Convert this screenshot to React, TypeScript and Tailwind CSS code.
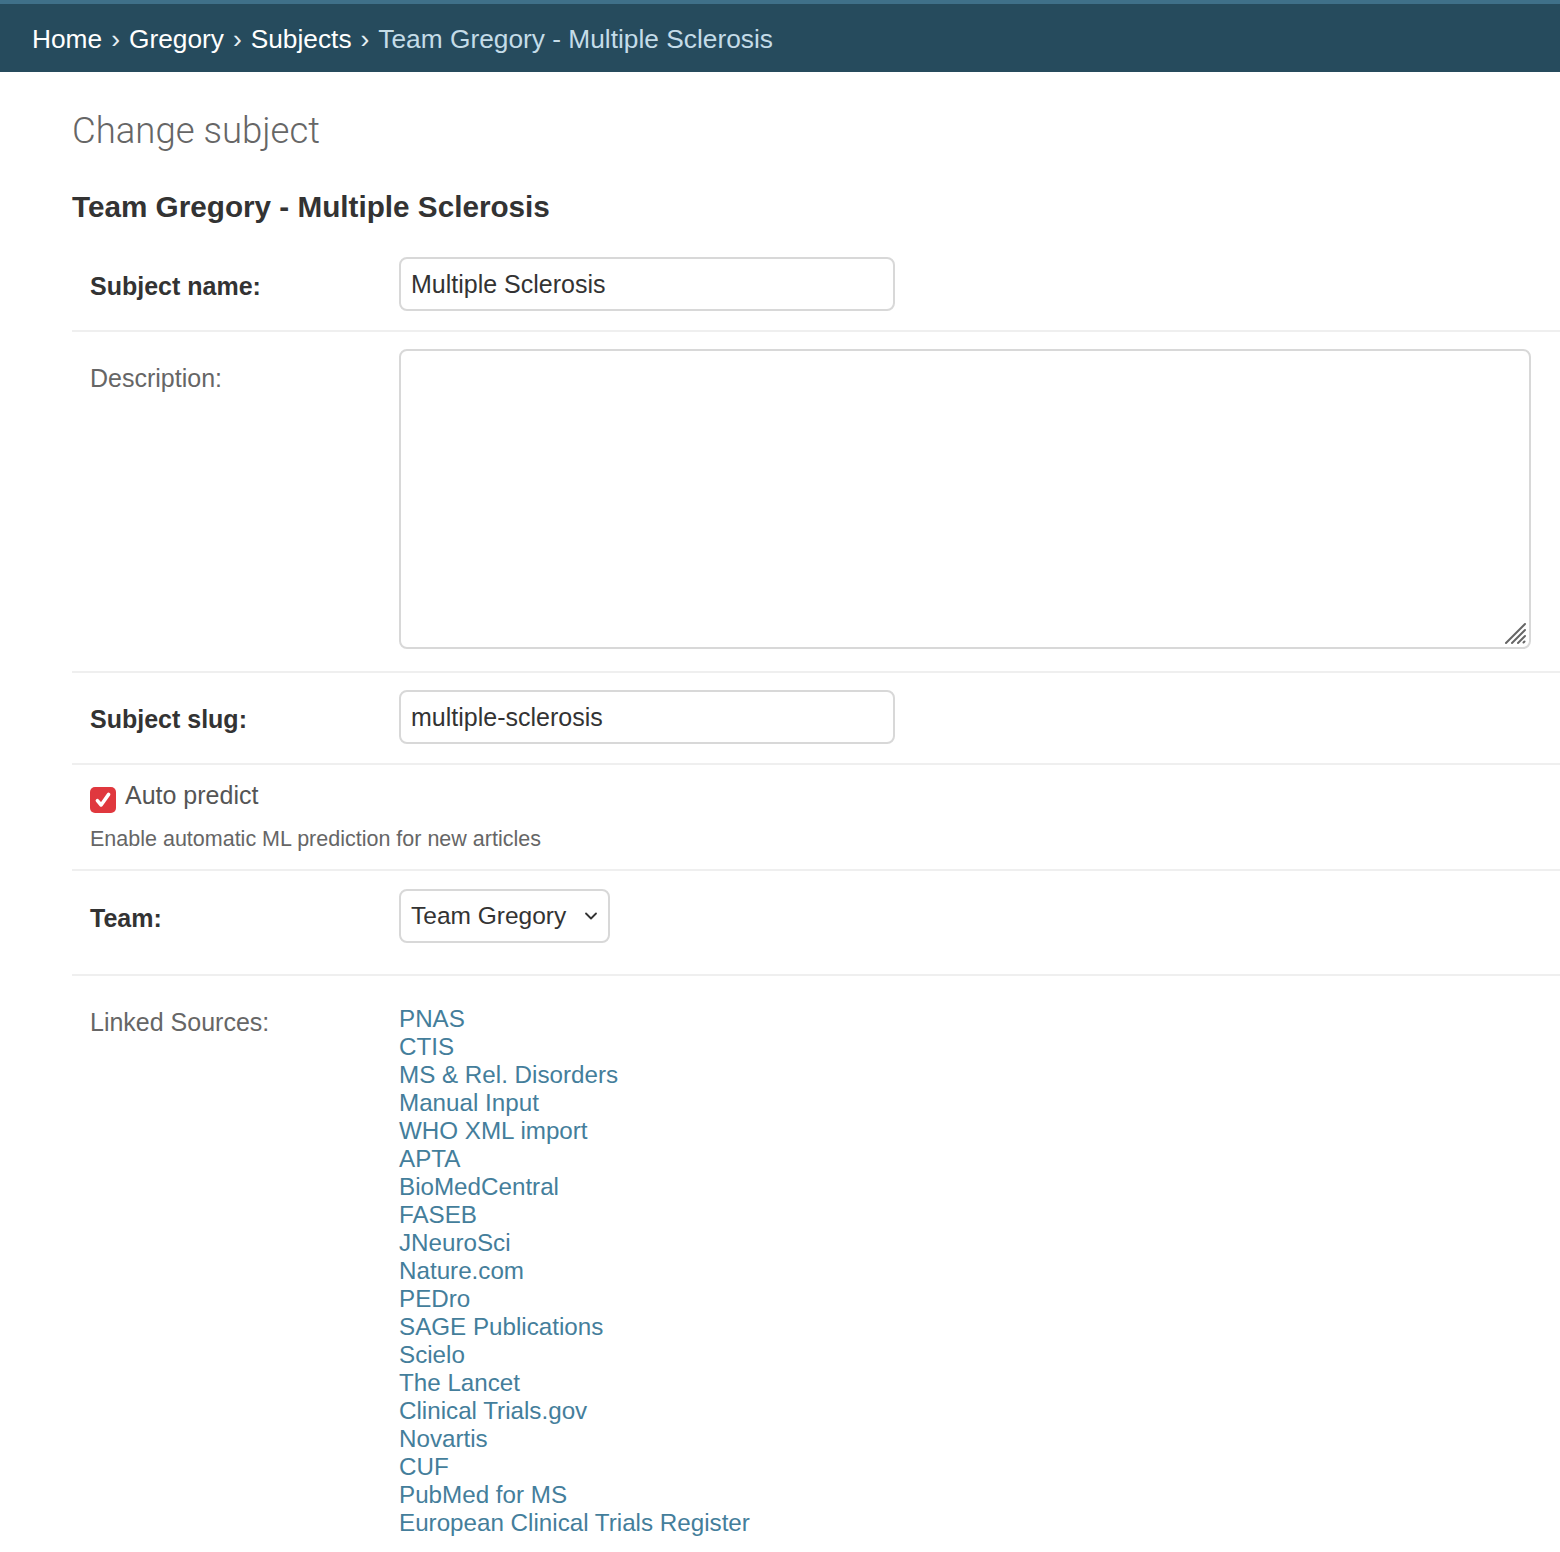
import { ChevronDown } from "lucide-react";

const sources = [
  "PNAS",
  "CTIS",
  "MS & Rel. Disorders",
  "Manual Input",
  "WHO XML import",
  "APTA",
  "BioMedCentral",
  "FASEB",
  "JNeuroSci",
  "Nature.com",
  "PEDro",
  "SAGE Publications",
  "Scielo",
  "The Lancet",
  "Clinical Trials.gov",
  "Novartis",
  "CUF",
  "PubMed for MS",
  "European Clinical Trials Register",
];

const font = "font-['Liberation_Sans',Arial,sans-serif]";

function Label({ children, bold }: { children: React.ReactNode; bold?: boolean }) {
  return (
    <label
      className={`mt-[14px] w-[309px] shrink-0 text-[25px] leading-[30px] ${
        bold ? "font-bold text-[#333]" : "text-[#666]"
      }`}
    >
      {children}
    </label>
  );
}

function Breadcrumbs() {
  const sep = <span className="mx-[9px] text-[#e6eff4]">›</span>;
  return (
    <div className="flex h-[72px] items-center border-t-4 border-[#3f7089] bg-[#264b5d] pt-[3px] pl-[32px] text-[26.3px] text-white">
      <a>Home</a>
      {sep}
      <a>Gregory</a>
      {sep}
      <a>Subjects</a>
      {sep}
      <span className="text-[#c4dce8]">Team Gregory - Multiple Sclerosis</span>
    </div>
  );
}

export default function App() {
  return (
    <div className={`min-h-[1552px] bg-white ${font}`}>
      <Breadcrumbs />
      <main className="pl-[72px]">
        <h1 className="mt-[37px] font-['Roboto',sans-serif] text-[36.5px] font-light leading-[44px] text-[#666]">
          Change subject
        </h1>
        <h2 className="mt-[36px] mb-[12px] text-[29.7px] font-bold leading-[36px] text-[#333]">
          Team Gregory - Multiple Sclerosis
        </h2>

        <div className="flex border-b-2 border-[#efefef] px-[18px] pt-[20px] pb-[19px]">
          <Label bold>Subject name:</Label>
          <input
            readOnly
            value="Multiple Sclerosis"
            className="h-[54px] w-[496px] rounded-lg border-2 border-[#d8d8d8] px-[10px] text-[25px] text-[#333] outline-none"
          />
        </div>

        <div className="flex border-b-2 border-[#efefef] px-[18px] pt-[17px] pb-[22px]">
          <Label>Description:</Label>
          <div className="relative">
            <textarea
              readOnly
              className="block h-[300px] w-[1132px] resize-none rounded-lg border-2 border-[#d8d8d8] px-[10px] text-[25px] text-[#333] outline-none"
            />
            {/* resize grip */}
            <svg viewBox="0 0 24 24" className="absolute right-[4px] bottom-[4px] h-[24px] w-[24px]" stroke="#666" strokeWidth="2" strokeLinecap="round">
              <path d="M3 22L22 3M9 22L22 9M15 22L22 15M20.5 21.5L21.5 20.5" />
            </svg>
          </div>
        </div>

        <div className="flex border-b-2 border-[#efefef] px-[18px] pt-[17px] pb-[19px]">
          <Label bold>Subject slug:</Label>
          <input
            readOnly
            value="multiple-sclerosis"
            className="h-[54px] w-[496px] rounded-lg border-2 border-[#d8d8d8] px-[10px] text-[25px] text-[#333] outline-none"
          />
        </div>

        <div className="border-b-2 border-[#efefef] px-[18px] pt-[18px] pb-[17px]">
          <div className="flex items-start">
            <span className="mt-[4px] flex h-[26px] w-[26px] items-center justify-center rounded-[5px] bg-[#e0383e]">
              <svg viewBox="0 0 16 16" className="h-[20px] w-[20px]" fill="none" stroke="white" strokeWidth="2.8" strokeLinecap="round" strokeLinejoin="round">
                <path d="M3.5 8.5l3 3.5L12.5 3.5" />
              </svg>
            </span>
            <span className="ml-[9px] text-[25px] leading-[24px] text-[#555]">Auto predict</span>
          </div>
          <p className="mt-[13px] text-[21.5px] leading-[26px] text-[#666]">
            Enable automatic ML prediction for new articles
          </p>
        </div>

        <div className="flex border-b-2 border-[#efefef] px-[18px] pt-[18px] pb-[31px]">
          <Label bold>Team:</Label>
          <div className="flex h-[54px] w-[211px] items-center justify-between rounded-lg border-2 border-[#d8d8d8] pr-[7px] pl-[10px] text-[24.5px] text-[#333]">
            <span>Team Gregory</span>
            <ChevronDown className="h-[20px] w-[20px] text-[#333]" strokeWidth={2.2} />
          </div>
        </div>

        <div className="flex px-[18px] pt-[29px]">
          <label className="mt-[3px] w-[309px] shrink-0 text-[25px] leading-[28px] text-[#666]">
            Linked Sources:
          </label>
          <div className="flex flex-col">
            {sources.map((s) => (
              <a key={s} className="text-[24.2px] leading-[28px] text-[#447e9b]">
                {s}
              </a>
            ))}
          </div>
        </div>
      </main>
    </div>
  );
}
